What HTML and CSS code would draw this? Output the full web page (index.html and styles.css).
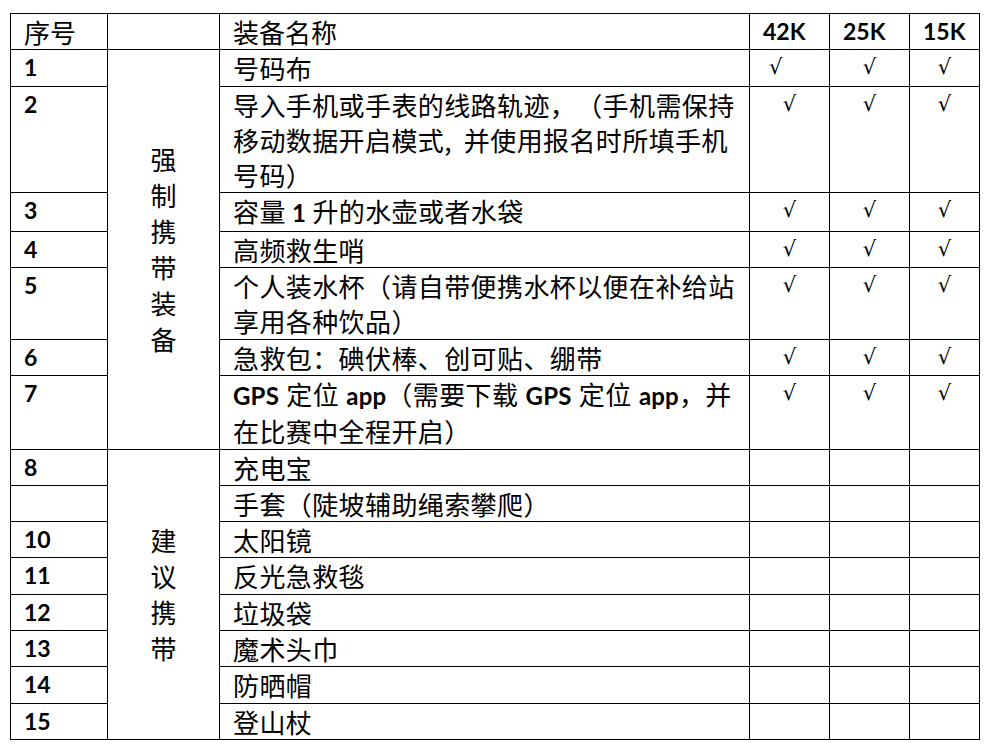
FILE: index.html
```html
<!DOCTYPE html>
<html lang="zh-CN">
<head>
<meta charset="utf-8">
<title>装备清单</title>
<link rel="stylesheet" href="styles.css">
</head>
<body>
<table class="gear">
  <colgroup>
    <col class="c-no"><col class="c-cat"><col class="c-name"><col class="c-k"><col class="c-k"><col class="c-k15">
  </colgroup>
  <thead>
    <tr>
      <th class="name">序号</th>
      <th></th>
      <th class="name">装备名称</th>
      <th class="dist">42K</th>
      <th class="dist">25K</th>
      <th class="dist">15K</th>
    </tr>
  </thead>
  <tbody>
    <tr>
      <td class="no">1</td>
      <td class="cat" rowspan="7"><div class="vert">强制携带装备</div></td>
      <td class="name">号码布</td>
      <td class="chk chk-left">√</td><td class="chk">√</td><td class="chk">√</td>
    </tr>
    <tr>
      <td class="no">2</td>
      <td class="name">导入手机或手表的线路轨迹，（手机需保持<br>移动数据开启模式<span class="hc">,</span>并使用报名时所填手机<br>号码）</td>
      <td class="chk">√</td><td class="chk">√</td><td class="chk">√</td>
    </tr>
    <tr>
      <td class="no">3</td>
      <td class="name">容量 <b class="lat">1</b> 升的水壶或者水袋</td>
      <td class="chk">√</td><td class="chk">√</td><td class="chk">√</td>
    </tr>
    <tr>
      <td class="no">4</td>
      <td class="name">高频救生哨</td>
      <td class="chk">√</td><td class="chk">√</td><td class="chk">√</td>
    </tr>
    <tr>
      <td class="no">5</td>
      <td class="name">个人装水杯（请自带便携水杯以便在补给站<br>享用各种饮品）</td>
      <td class="chk">√</td><td class="chk">√</td><td class="chk">√</td>
    </tr>
    <tr>
      <td class="no">6</td>
      <td class="name">急救包：碘伏棒、创可贴、绷带</td>
      <td class="chk">√</td><td class="chk">√</td><td class="chk">√</td>
    </tr>
    <tr>
      <td class="no">7</td>
      <td class="name gps"><b class="lat">GPS</b> 定位 <b class="lat">app</b>（需要下载 <b class="lat">GPS</b> 定位 <b class="lat">app</b>，并<br>在比赛中全程开启）</td>
      <td class="chk">√</td><td class="chk">√</td><td class="chk">√</td>
    </tr>
    <tr>
      <td class="no">8</td>
      <td class="cat" rowspan="8"><div class="vert">建议携带</div></td>
      <td class="name">充电宝</td>
      <td></td><td></td><td></td>
    </tr>
    <tr>
      <td class="no"></td>
      <td class="name">手套（陡坡辅助绳索攀爬）</td>
      <td></td><td></td><td></td>
    </tr>
    <tr>
      <td class="no">10</td>
      <td class="name">太阳镜</td>
      <td></td><td></td><td></td>
    </tr>
    <tr>
      <td class="no">11</td>
      <td class="name">反光急救毯</td>
      <td></td><td></td><td></td>
    </tr>
    <tr>
      <td class="no">12</td>
      <td class="name">垃圾袋</td>
      <td></td><td></td><td></td>
    </tr>
    <tr>
      <td class="no">13</td>
      <td class="name">魔术头巾</td>
      <td></td><td></td><td></td>
    </tr>
    <tr>
      <td class="no">14</td>
      <td class="name">防晒帽</td>
      <td></td><td></td><td></td>
    </tr>
    <tr>
      <td class="no">15</td>
      <td class="name">登山杖</td>
      <td></td><td></td><td></td>
    </tr>
  </tbody>
</table>
</body>
</html>
```
FILE: styles.css
```css
html, body {
  background: #ffffff;
}
body {
  margin: 13px 0 0 10px;
  color: #000000;
  font-family: "Noto Sans CJK SC", sans-serif;
}
.gear {
  border-collapse: collapse;
  table-layout: fixed;
  width: 969px;
}
.c-no { width: 97px; }
.c-cat { width: 112px; }
.c-name { width: 530px; }
.c-k { width: 80px; }
.c-k15 { width: 70px; }

.gear th,
.gear td {
  border: 1.3px solid #000000;
  padding: 0 0 0 13px;
  vertical-align: top;
  text-align: left;
  font-size: 26px;
  font-weight: 400;
  line-height: 35.3px;
  height: 35.3px;
  text-spacing-trim: space-all;
}
.gear th.dist {
  font-family: "Lato", "Open Sans", sans-serif;
  font-weight: 700;
  font-size: 23px;
}
.gear td.no {
  font-family: "Lato", "Open Sans", sans-serif;
  font-weight: 700;
  font-size: 23px;
}
.gear td.name {
  padding-right: 4px;
  letter-spacing: 0.4px;
  white-space: nowrap;
}
.gear td.gps {
  word-spacing: 1px;
}
.hc {
  padding-right: 12px;
}
.lat {
  font-family: "Lato", "Open Sans", sans-serif;
  font-weight: 700;
  font-size: 24px;
  letter-spacing: 0.2px;
}
.gear td.cat {
  vertical-align: middle;
  padding: 0;
}
.vert {
  width: 1em;
  margin: 0 auto;
  text-align: center;
  word-break: break-all;
  line-height: 36px;
}
.gear td.chk {
  padding: 0;
  text-align: center;
  font-family: "DejaVu Sans", sans-serif;
  font-size: 21px;
}
.gear td.chk-left {
  text-align: left;
  padding-left: 19px;
}
```
